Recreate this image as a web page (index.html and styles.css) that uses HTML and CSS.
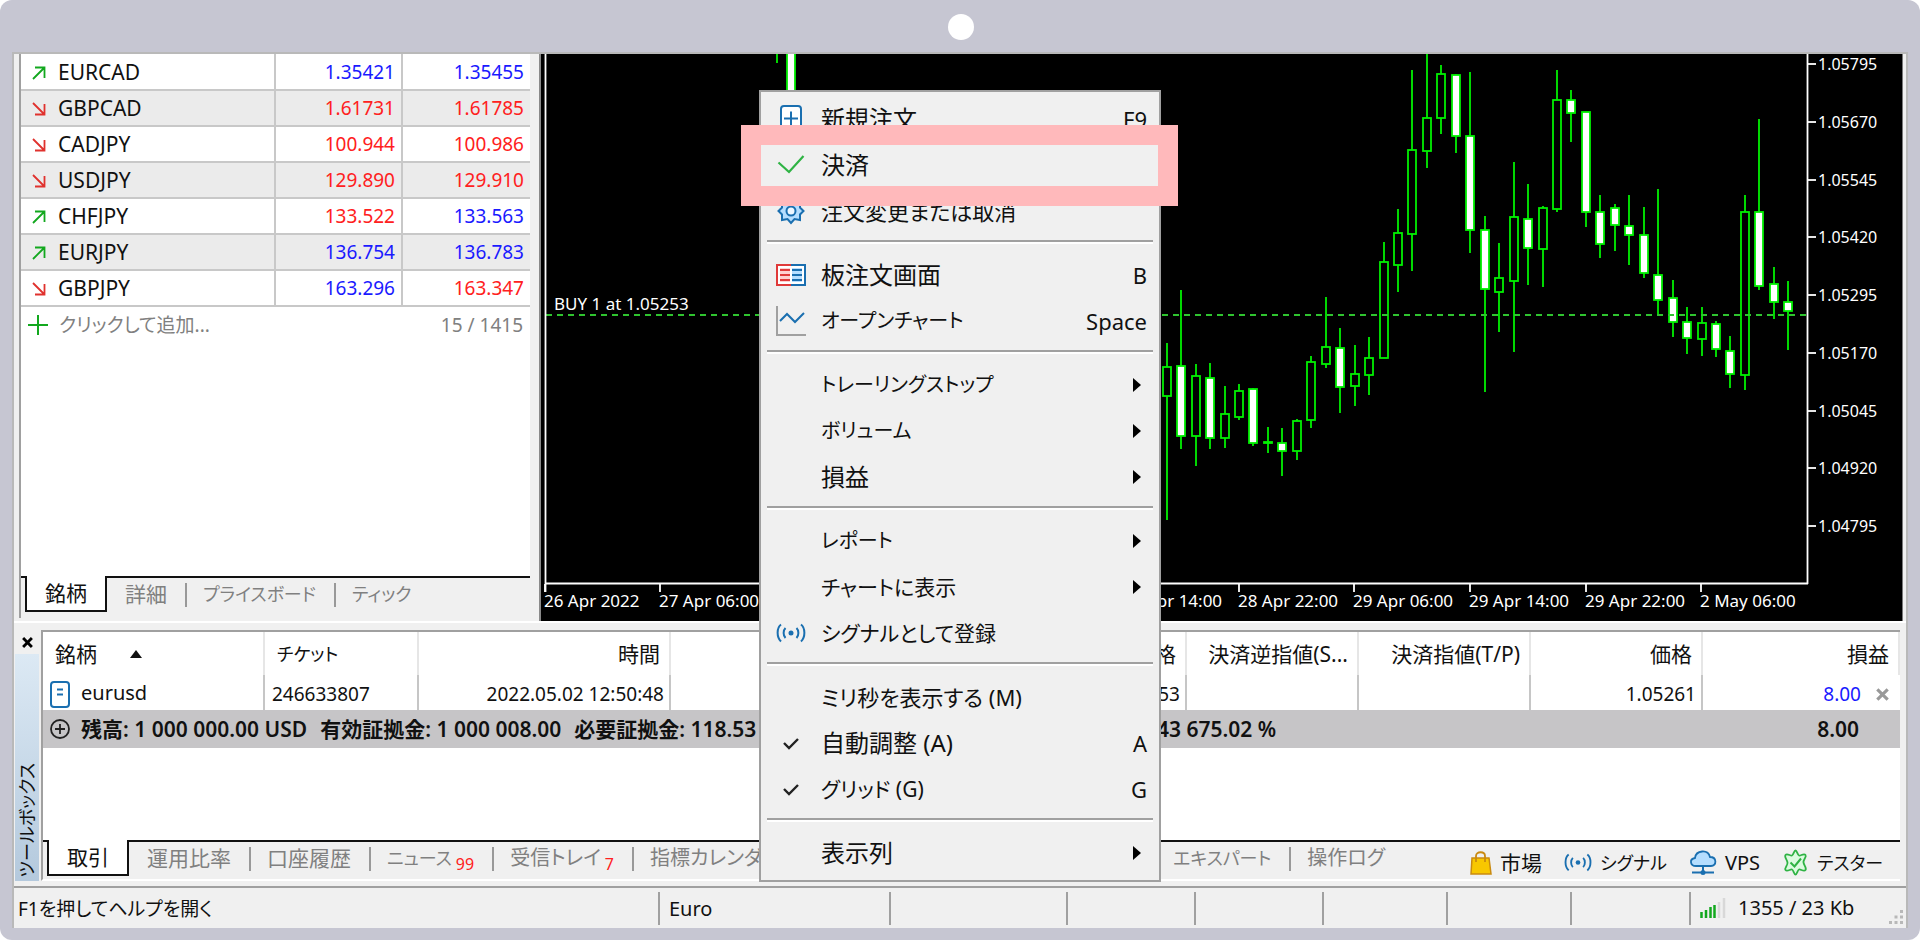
FILE: index.html
```html
<!DOCTYPE html>
<html lang="ja">
<head>
<meta charset="utf-8">
<title>取引ターミナル</title>
<link rel="stylesheet" href="styles.css">
</head>
<body>
<svg class="defs" width="0" height="0" aria-hidden="true">
  <symbol id="up" viewBox="0 0 14 14"><path d="M1 13 12 2M3 1.5h9.5V12" fill="none" stroke="#12a81e" stroke-width="1.8"/></symbol>
  <symbol id="down" viewBox="0 0 14 14"><path d="M1 1 12 12M3 12.5h9.5V2" fill="none" stroke="#e0322e" stroke-width="1.8"/></symbol>
  <symbol id="signal" viewBox="0 0 30 20"><g fill="none" stroke="#1a6fb0" stroke-width="2"><path d="M5 1.500C.500 5 .500 14 5 18.500M25 1.500c4.500 3.500 4.500 13 0 17M9.500 5c-2.500 2.500-2.500 7.500 0 10M20.500 5c2.500 2.500 2.500 7.500 0 10"/></g><circle cx="15" cy="10" r="2.500" fill="#1a6fb0"/></symbol>
</svg>
<div class="device">
  <span class="camera"></span>
  <main class="screen">
    <div class="upper">
      <section class="watch">
        <table class="quotes">
          <tr><th scope="row"><svg><use href="#up"/></svg>EURCAD</th><td class="blue">1.35421</td><td class="blue">1.35455</td></tr>
          <tr><th scope="row"><svg><use href="#down"/></svg>GBPCAD</th><td class="red">1.61731</td><td class="red">1.61785</td></tr>
          <tr><th scope="row"><svg><use href="#down"/></svg>CADJPY</th><td class="red">100.944</td><td class="red">100.986</td></tr>
          <tr><th scope="row"><svg><use href="#down"/></svg>USDJPY</th><td class="red">129.890</td><td class="red">129.910</td></tr>
          <tr><th scope="row"><svg><use href="#up"/></svg>CHFJPY</th><td class="red">133.522</td><td class="blue">133.563</td></tr>
          <tr><th scope="row"><svg><use href="#up"/></svg>EURJPY</th><td class="blue">136.754</td><td class="blue">136.783</td></tr>
          <tr><th scope="row"><svg><use href="#down"/></svg>GBPJPY</th><td class="blue">163.296</td><td class="red">163.347</td></tr>
        </table>
        <div class="add-row">
          <svg viewBox="0 0 20 20"><path d="M10 0v20M0 10h20" stroke="#12a81e" stroke-width="2"/></svg>
          <button class="add">クリックして追加...</button>
          <span class="count">15 / 1415</span>
        </div>
        <nav class="tabs">
          <button class="tab active">銘柄</button>
          <button class="tab">詳細</button>
          <button class="tab kana">プライスボード</button>
          <button class="tab kana">ティック</button>
        </nav>
      </section>
      <section class="chart">
        <svg id="chart" viewBox="541 54 1361 567" role="img" aria-label="EURUSD"></svg>
      </section>
    </div>

    <section class="toolbox">
      <div class="handle">
        <button class="close" aria-label="閉じる"><svg viewBox="0 0 10 10"><path d="M1 1l8 8M9 1 1 9" stroke="#000" stroke-width="2.600"/></svg></button>
        <div class="grip"><span>ツールボックス</span></div>
      </div>
      <div class="terminal">
        <table class="trades">
          <colgroup><col class="c-symbol"><col class="c-ticket"><col class="c-time"><col class="c-std"><col class="c-std"><col class="c-std"><col class="c-std"><col class="c-std"><col class="c-std"><col></colgroup>
          <thead>
            <tr><th class="left">銘柄<span class="sort"></span></th><th class="left kana">チケット</th><th>時間</th><th></th><th></th><th>価格</th><th>決済逆指値(S...</th><th>決済指値(T/P)</th><th>価格</th><th>損益</th></tr>
          </thead>
          <tbody>
            <tr>
              <td class="left"><svg class="doc" viewBox="0 0 20 27"><rect x="1" y="1" width="18" height="25" rx="3" fill="#fff" stroke="#1a6fb0" stroke-width="2"/><path d="M7 8.500h6M7 13.500h6" stroke="#1a6fb0" stroke-width="2"/></svg>eurusd</td>
              <td class="left num">246633807</td><td class="num">2022.05.02 12:50:48</td><td></td><td></td><td class="num">1.05253</td><td></td><td></td><td class="num">1.05261</td>
              <td class="num profit"><span class="blue">8.00</span><button aria-label="決済"><svg viewBox="0 0 10 10"><path d="M1 1l8 8M9 1 1 9" stroke="#999" stroke-width="2.400"/></svg></button></td>
            </tr>
          </tbody>
        </table>
        <div class="summary">
          <svg viewBox="0 0 20 20"><g fill="none" stroke="#222" stroke-width="1.800"><circle cx="10" cy="10" r="9"/><path d="M10 5v10M5 10h10"/></g></svg>
          <div class="sums"><span>残高: 1 000 000.00 USD</span><span>有効証拠金: 1 000 008.00</span><span>必要証拠金: 118.53</span></div>
          <span class="level">843 675.02 %</span>
          <span class="total">8.00</span>
        </div>
        <div class="tabbar">
          <nav class="tabs">
            <button class="tab active">取引</button>
            <button class="tab">運用比率</button>
            <button class="tab">口座履歴</button>
            <button class="tab kana">ニュース<sub>99</sub></button>
            <button class="tab mix">受信トレイ<sub>7</sub></button>
            <button class="tab mix">指標カレンダー</button>
          </nav>
          <nav class="tabs more">
            <button class="tab kana">エキスパート</button>
            <button class="tab mix">操作ログ</button>
          </nav>
          <div class="services">
            <button><svg width="22" height="24" viewBox="0 0 22 24"><path d="M2 7h17l2 16H1z" fill="#f8c700" stroke="#c98a10" stroke-width="1.500"/><path d="M6 11V5c0-5 9-5 9 0v6" fill="none" stroke="#c98a10" stroke-width="1.800"/></svg>市場</button>
            <button class="kana"><svg width="28" height="19"><use href="#signal"/></svg>シグナル</button>
            <button class="vps"><svg width="28" height="25" viewBox="0 0 28 25"><path d="M7 16C1 16 0 9 6 8 7 0 19-1 21 7c7 0 7 9 1 9z" fill="#b5deff" stroke="#1a6fb0" stroke-width="1.800"/><path d="M14 16v6M3 22.500h22" stroke="#1a6fb0" stroke-width="2"/><circle cx="14" cy="22.500" r="2.500" fill="#1a6fb0"/></svg>VPS</button>
            <button class="kana"><svg width="27" height="27" viewBox="0 0 27 27"><path d="M13.500 1.500C15 1.500 15.500 6 17 6.500s5-2.500 6.500-.5-2.500 4.500-2 7.500 3.500 5.500 2 7.500-5-1-6.500-.5-2 5-3.500 5-2-4.500-3.500-5-5 2.500-6.500.5 2.500-4.500 2-7.500S2 8 3.500 6 8.500 7 10 6.500s2-5 3.500-5z" fill="#dcfbe0" stroke="#2fb344" stroke-width="1.800"/><path d="M8.500 13.500l4 4 6.500-8" fill="none" stroke="#2fb344" stroke-width="2"/></svg>テスター</button>
          </div>
        </div>
      </div>
    </section>

    <footer class="status">
      <span class="help">F1を押してヘルプを開く</span><span class="s-euro">Euro</span><span class="s-a"></span><span class="s-b"></span><span class="s-b"></span><span class="s-c"></span><span class="s-c"></span><span class="s-d"></span>
      <span class="traffic"><svg width="26" height="20" viewBox="0 0 26 20"><path d="M1.500 20v-6M6 20V12M10.500 20V9M14.500 20V7" stroke="#12a81e" stroke-width="2.500"/><path d="M19 20V4M24 20V0" stroke="#d8d8d8" stroke-width="2.500"/></svg>1355 / 23 Kb</span>
      <svg class="resize" width="15" height="15" viewBox="0 0 15 15"><path d="M11 0h3v3h-3zM11 5.500h3v3h-3zM5.500 5.500h3v3h-3zM11 11h3v3h-3zM5.500 11h3v3h-3zM0 11h3v3H0z" fill="#b8b8b8"/></svg>
    </footer>

    <div class="menu" role="menu">
      <button role="menuitem"><svg viewBox="0 0 30 30"><rect x="5" y="2" width="20" height="26" rx="3" fill="#fff" stroke="#1a6fb0" stroke-width="2"/><path d="M15 7.500v14M8 14.500h14" stroke="#1a6fb0" stroke-width="2"/></svg><span>新規注文</span><kbd>F9</kbd></button>
      <button role="menuitem" class="marked"><svg viewBox="0 0 30 30"><path d="M2.500 12.500 13 22 27.500 6" fill="none" stroke="#2fb344" stroke-width="2.200"/></svg><span>決済</span></button>
      <button role="menuitem"><svg viewBox="0 0 30 30"><path d="M15 3l3.500 4 5.500-1 0 5.500 3.500 3.500-3.500 3.500v5.500l-5.500-1L15 27l-3.500-4L6 24v-5.500L2.500 15 6 11.500V6l5.500 1z" fill="#b5deff" stroke="#1a6fb0" stroke-width="2"/><circle cx="15" cy="15" r="4.500" fill="#eef7ff" stroke="#1a6fb0" stroke-width="2"/></svg><span class="wide">注文変更または取消</span></button>
      <hr>
      <button role="menuitem"><svg viewBox="0 0 30 30"><path d="M15 5H1v20h14" fill="#fff" stroke="#e03a3a" stroke-width="2"/><path d="M15 5h14v20H15" fill="#fff" stroke="#1a6fb0" stroke-width="2"/><path d="M4 8h10v14H4z" fill="#ffd0d0"/><path d="M16 8h10v14H16z" fill="#b5deff"/><path d="M4 10h10M4 15h10M4 20h10" stroke="#e03a3a" stroke-width="2"/><path d="M16 10h10M16 15h10M16 20h10" stroke="#1a6fb0" stroke-width="2"/></svg><span>板注文画面</span><kbd>B</kbd></button>
      <button role="menuitem"><svg viewBox="0 0 30 30"><path d="M1 0v29h29" fill="none" stroke="#a0a0a0" stroke-width="2"/><path d="M4 15l7-7 8 8 9-9" fill="none" stroke="#1a6fb0" stroke-width="2"/></svg><span class="kana">オープンチャート</span><kbd>Space</kbd></button>
      <hr>
      <button role="menuitem" class="sub"><i></i><span class="kana">トレーリングストップ</span></button>
      <button role="menuitem" class="sub"><i></i><span class="kana">ボリューム</span></button>
      <button role="menuitem" class="sub"><i></i><span>損益</span></button>
      <hr>
      <button role="menuitem" class="sub"><i></i><span class="kana">レポート</span></button>
      <button role="menuitem" class="sub"><i></i><span class="mix">チャートに表示</span></button>
      <button role="menuitem"><svg viewBox="0 0 30 20"><use href="#signal"/></svg><span class="mix">シグナルとして登録</span></button>
      <hr>
      <button role="menuitem"><i></i><span class="wide">ミリ秒を表示する (M)</span></button>
      <button role="menuitem"><svg viewBox="0 0 30 30"><path d="M8 15l5 5 9-9" fill="none" stroke="#222" stroke-width="2.400"/></svg><span>自動調整 (A)</span><kbd>A</kbd></button>
      <button role="menuitem"><svg viewBox="0 0 30 30"><path d="M8 15l5 5 9-9" fill="none" stroke="#222" stroke-width="2.400"/></svg><span class="mix">グリッド (G)</span><kbd>G</kbd></button>
      <hr>
      <button role="menuitem" class="sub"><i></i><span>表示列</span></button>
    </div>
  </main>
</div>
<script src="chart.js"></script>
</body>
</html>
```
FILE: styles.css
```css
* { box-sizing: border-box; }
body {
  margin: 0;
  background: #fff;
  color: #111;
  font: 20px/28px "Noto Sans", "Noto Sans CJK JP", sans-serif;
  font-feature-settings: "palt";
}
button {
  font: inherit;
  font-feature-settings: inherit;
  color: inherit;
  background: none;
  border: 0;
  padding: 0;
  margin: 0;
  white-space: nowrap;
}
table { border-collapse: collapse; table-layout: fixed; width: 100%; }
th { font-weight: 400; }
.defs { position: absolute; }
.blue { color: #1a1aff; }
.red { color: #ff2020; }

.device {
  position: relative;
  min-height: 100vh;
  padding: 52px 12px 12px;
  border-radius: 12px;
  background: #c6c6d2;
  display: flex;
}
.camera {
  position: absolute;
  top: 14px;
  left: 50%;
  width: 26px;
  height: 26px;
  margin-left: -12px;
  border-radius: 50%;
  background: #fff;
}
.screen {
  position: relative;
  flex: 1;
  min-width: 0;
  display: flex;
  flex-direction: column;
  border: 2px solid #b9b9b9;
  border-bottom: 0;
  background: #f0f0f0;
}

/* market watch and chart */
.upper {
  display: grid;
  grid-template-columns: 525px 1fr;
  border-bottom: 2px solid #fff;
  padding-right: 3px;
}
.watch {
  display: flex;
  flex-direction: column;
  margin: 0 9px 3px 5px;
  border-left: 2px solid #a0a0a0;
  background: #fff;
}
.quotes tr { height: 36px; border-bottom: 2px solid #c8c8c8; }
.quotes tr:nth-child(even) { background: #ebebeb; }
.quotes th { width: 254px; text-align: left; padding: 0 0 0 11px; font-size: 21px; }
.quotes th svg { width: 14px; height: 14px; margin-right: 12px; }
.quotes td { text-align: right; padding: 0 6px; border-left: 2px solid #c8c8c8; font-size: 19px; }
.quotes td:nth-child(2) { width: 127px; }
.add-row { display: flex; align-items: center; height: 36px; padding: 0 7px; color: #808080; }
.add-row svg { width: 20px; height: 20px; margin-right: 11px; }
.add { font-size: 19px; }
.count { margin-left: auto; font-size: 19px; }
.tabs { display: flex; border-top: 2px solid #111; background: #f0f0f0; padding-left: 4px; }
.watch > .tabs { margin-top: auto; height: 42px; }
.tab { position: relative; height: 32px; padding: 0 18px; color: #808080; font-size: 21px; }
.tab.active {
  height: 36px;
  margin-top: -2px;
  border: 2px solid #111;
  border-top: 0;
  background: #fff;
  color: #111;
}
.tab.kana, .trades .kana, .services .kana { font-size: 18px; }
.tab.mix { font-size: 20px; }
.tab:not(.active) + .tab::before, .more .tab + .tab::before {
  content: "";
  position: absolute;
  left: 0;
  top: 5px;
  height: 24px;
  border-left: 2px solid #999;
}
.tab sub { color: #ff2020; font-size: 16px; line-height: 0; margin-left: 4px; }
.chart { background: #000; border-left: 2px solid #8a8a8a; border-right: 1px solid #777; }
.chart svg { display: block; width: 100%; }
.chart text { font-size: 17px; fill: #fff; }
.chart .price { font-size: 16px; }

/* toolbox */
.toolbox {
  display: grid;
  grid-template-columns: 27px 1fr;
  flex: 1;
  margin-top: 7px;
  padding: 0 6px 5px 0;
}
.handle { display: flex; flex-direction: column; padding: 0 2px 0 1px; }
.close { height: 24px; line-height: 0; }
.close svg { width: 11px; height: 11px; }
.grip {
  flex: 1;
  display: flex;
  justify-content: center;
  align-items: flex-end;
  padding-bottom: 4px;
  background: linear-gradient(#dce9f4, #b4c9dd);
  font-size: 18px;
  line-height: 24px;
}
.grip span { writing-mode: vertical-rl; text-orientation: sideways; transform: rotate(180deg); white-space: nowrap; }
.terminal {
  display: flex;
  flex-direction: column;
  min-width: 0;
  border-top: 2px solid #a0a0a0;
  border-left: 2px solid #a0a0a0;
  border-bottom: 2px solid #fff;
  background: #fff;
}
.c-symbol { width: 221px; }
.c-ticket { width: 154px; }
.c-time { width: 252px; }
.c-std { width: 172px; }
.trades th { height: 43px; padding: 0 9px; text-align: right; border-right: 2px solid #e6e6e6; white-space: nowrap; font-size: 21px; }
.trades td { height: 35px; padding: 2px 5px 0; text-align: right; border-right: 2px solid #c6c6c6; }
.trades td:last-child { border-right: 0; }
.trades .left { text-align: left; padding-left: 7px; }
.trades th.left { padding-left: 12px; }
.num { font-size: 19px; }
.sort { display: inline-block; margin-left: 33px; vertical-align: 4px; border: 6px solid transparent; border-top: 0; border-bottom: 8px solid #111; }
.doc { width: 20px; height: 27px; margin-right: 11px; vertical-align: middle; }
.trades .profit { padding-right: 10px; }
.profit button { margin-left: 15px; }
.profit svg { width: 13px; height: 13px; }
.summary { display: flex; align-items: center; height: 38px; padding: 0 41px 0 7px; background: #c6c5c7; font-size: 21px; font-weight: 600; white-space: nowrap; }
.summary > svg { width: 20px; height: 20px; margin-right: 11px; }
.sums { display: flex; gap: 13px; width: 1064px; font-size: 21px; }
.total { margin-left: auto; }
.tabbar { display: flex; margin-top: auto; height: 39px; border-top: 2px solid #111; background: #f0f0f0; }
.tabbar .tabs { border: 0; }
.tabbar > .tabs:first-child { width: 1108px; }
.services { display: flex; align-items: center; gap: 22px; margin-left: auto; padding: 4px 17px 0 0; color: #111; }
.services button { display: flex; align-items: center; gap: 8px; font-size: 21px; }
.services .vps { font-size: 20px; }

/* status bar */
.status { display: flex; align-items: center; height: 42px; border-top: 2px solid #a0a0a0; padding-right: 2px; }
.status > span { height: 33px; line-height: 34px; padding-left: 9px; border-left: 2px solid #a0a0a0; }
.status .help { width: 644px; border-left: 0; padding-left: 4px; font-size: 19px; }
.s-euro { width: 231px; }
.s-a { width: 177px; }
.s-b { width: 128px; }
.s-c { width: 124px; }
.s-d { width: 119px; }
.status .traffic { display: flex; align-items: center; gap: 12px; margin-right: auto; }
.resize { align-self: flex-end; margin-bottom: 3px; }

/* context menu */
.menu {
  position: absolute;
  left: 745px;
  top: 36px;
  width: 402px;
  padding: 4px 6px;
  border: 2px solid #a0a0a0;
  background: #f0f0f0;
  font-size: 24px;
}
.menu button { position: relative; display: flex; align-items: center; width: 100%; height: 46px; padding: 0 6px 0 9px; }
.menu svg, .menu i { width: 30px; height: 30px; margin-right: 15px; }
.menu .kana { font-size: 20px; }
.menu .mix { font-size: 21px; }
.menu .wide { font-size: 22px; }
.menu kbd { margin-left: auto; font: inherit; font-size: 22px; }
.menu hr { height: 4px; margin: 6px 0 8px; border: 0; border-top: 2px solid #a0a0a0; background: #fff; }
.sub::after { content: ""; margin-left: auto; margin-right: 6px; border: 7px solid transparent; border-right: 0; border-left: 8px solid #000; }
.menu .marked { z-index: 1; }
.marked::after { content: ""; position: absolute; inset: -17px -25px -18px -26px; border: 20px solid #ffb9bb; }
```
FILE: chart.js
```js
// One entry per bar: high, low, body top, body bottom, filled (bearish)
const bars = [
  [343,520,367,396,0],[290,449,366,436,1],[364,466,376,436,0],[363,449,378,438,1],[386,448,414,438,0],
  [384,420,391,417,0],[388,446,389,443,1],[427,453,442,443,0],[428,476,443,451,1],[419,460,421,451,0],
  [356,428,362,420,0],[297,368,347,364,0],[328,413,348,387,1],[345,406,374,386,0],[337,395,358,375,0],
  [242,358,262,358,0],[209,292,233,265,0],[70,271,150,234,0],[54,168,118,151,0],[65,134,74,118,0],
  [74,153,75,136,1],[72,253,136,230,1],[216,392,230,289,1],[243,332,278,292,0],[162,352,217,281,0],
  [184,285,219,248,1],[206,287,208,249,0],[70,212,100,209,0],[90,142,100,113,1],[112,227,112,212,1],
  [195,258,212,244,1],[204,251,208,225,1],[195,265,226,235,1],[207,278,235,273,1],[189,314,275,300,1],
  [280,337,298,322,1],[307,354,322,338,1],[307,356,323,339,0],[321,357,324,349,1],[336,388,351,374,1],
  [195,390,212,375,0],[119,290,212,286,1],[267,319,284,302,1],[281,350,302,311,1]
];
const xOf = i => Math.round(1166.7 + 14.455 * i);
const line = (x1, y1, x2, y2, color, extra = '') =>
  `<line x1="${x1}" y1="${y1}" x2="${x2}" y2="${y2}" stroke="${color}" stroke-width="1.8" ${extra}/>`;
const bar = (x, [hi, lo, top, bottom, filled]) =>
  line(x, hi, x, lo, '#00f000') +
  `<rect x="${x - 4}" y="${top}" width="8" height="${bottom - top}" fill="${filled ? '#fff' : '#000'}" stroke="#00f000" stroke-width="1.8"/>`;

let out = bars.map((b, i) => bar(xOf(i), b)).join('');
out += line(777, 54, 777, 63, '#00f000') + bar(791, [40, 140, 40, 130, 1]);
out += line(546, 315, 1807, 315, '#2fc42f', 'stroke-dasharray="6 5"');
out += line(545.5, 54, 545.5, 592, '#fff') + line(1807.5, 54, 1807.5, 584, '#fff') + line(545, 583.5, 1808, 583.5, '#fff');
out += '<text x="554" y="310">BUY 1 at 1.05253</text>';
['1.05795','1.05670','1.05545','1.05420','1.05295','1.05170','1.05045','1.04920','1.04795'].forEach((label, i) => {
  const y = Math.round(64 + 57.75 * i);
  out += line(1808, y, 1816, y, '#fff') + `<text class="price" x="1818" y="${y + 6}">${label}</text>`;
});
[[544,'26 Apr 2022'],[659,'27 Apr 06:00'],[1122,'28 Apr 14:00'],[1238,'28 Apr 22:00'],[1353,'29 Apr 06:00'],[1469,'29 Apr 14:00'],[1585,'29 Apr 22:00'],[1700,'2 May 06:00']].forEach(([x, label]) => {
  out += line(x + 1, 584, x + 1, 592, '#fff') + `<text x="${x}" y="607">${label}</text>`;
});
document.getElementById('chart').innerHTML = out;
```
